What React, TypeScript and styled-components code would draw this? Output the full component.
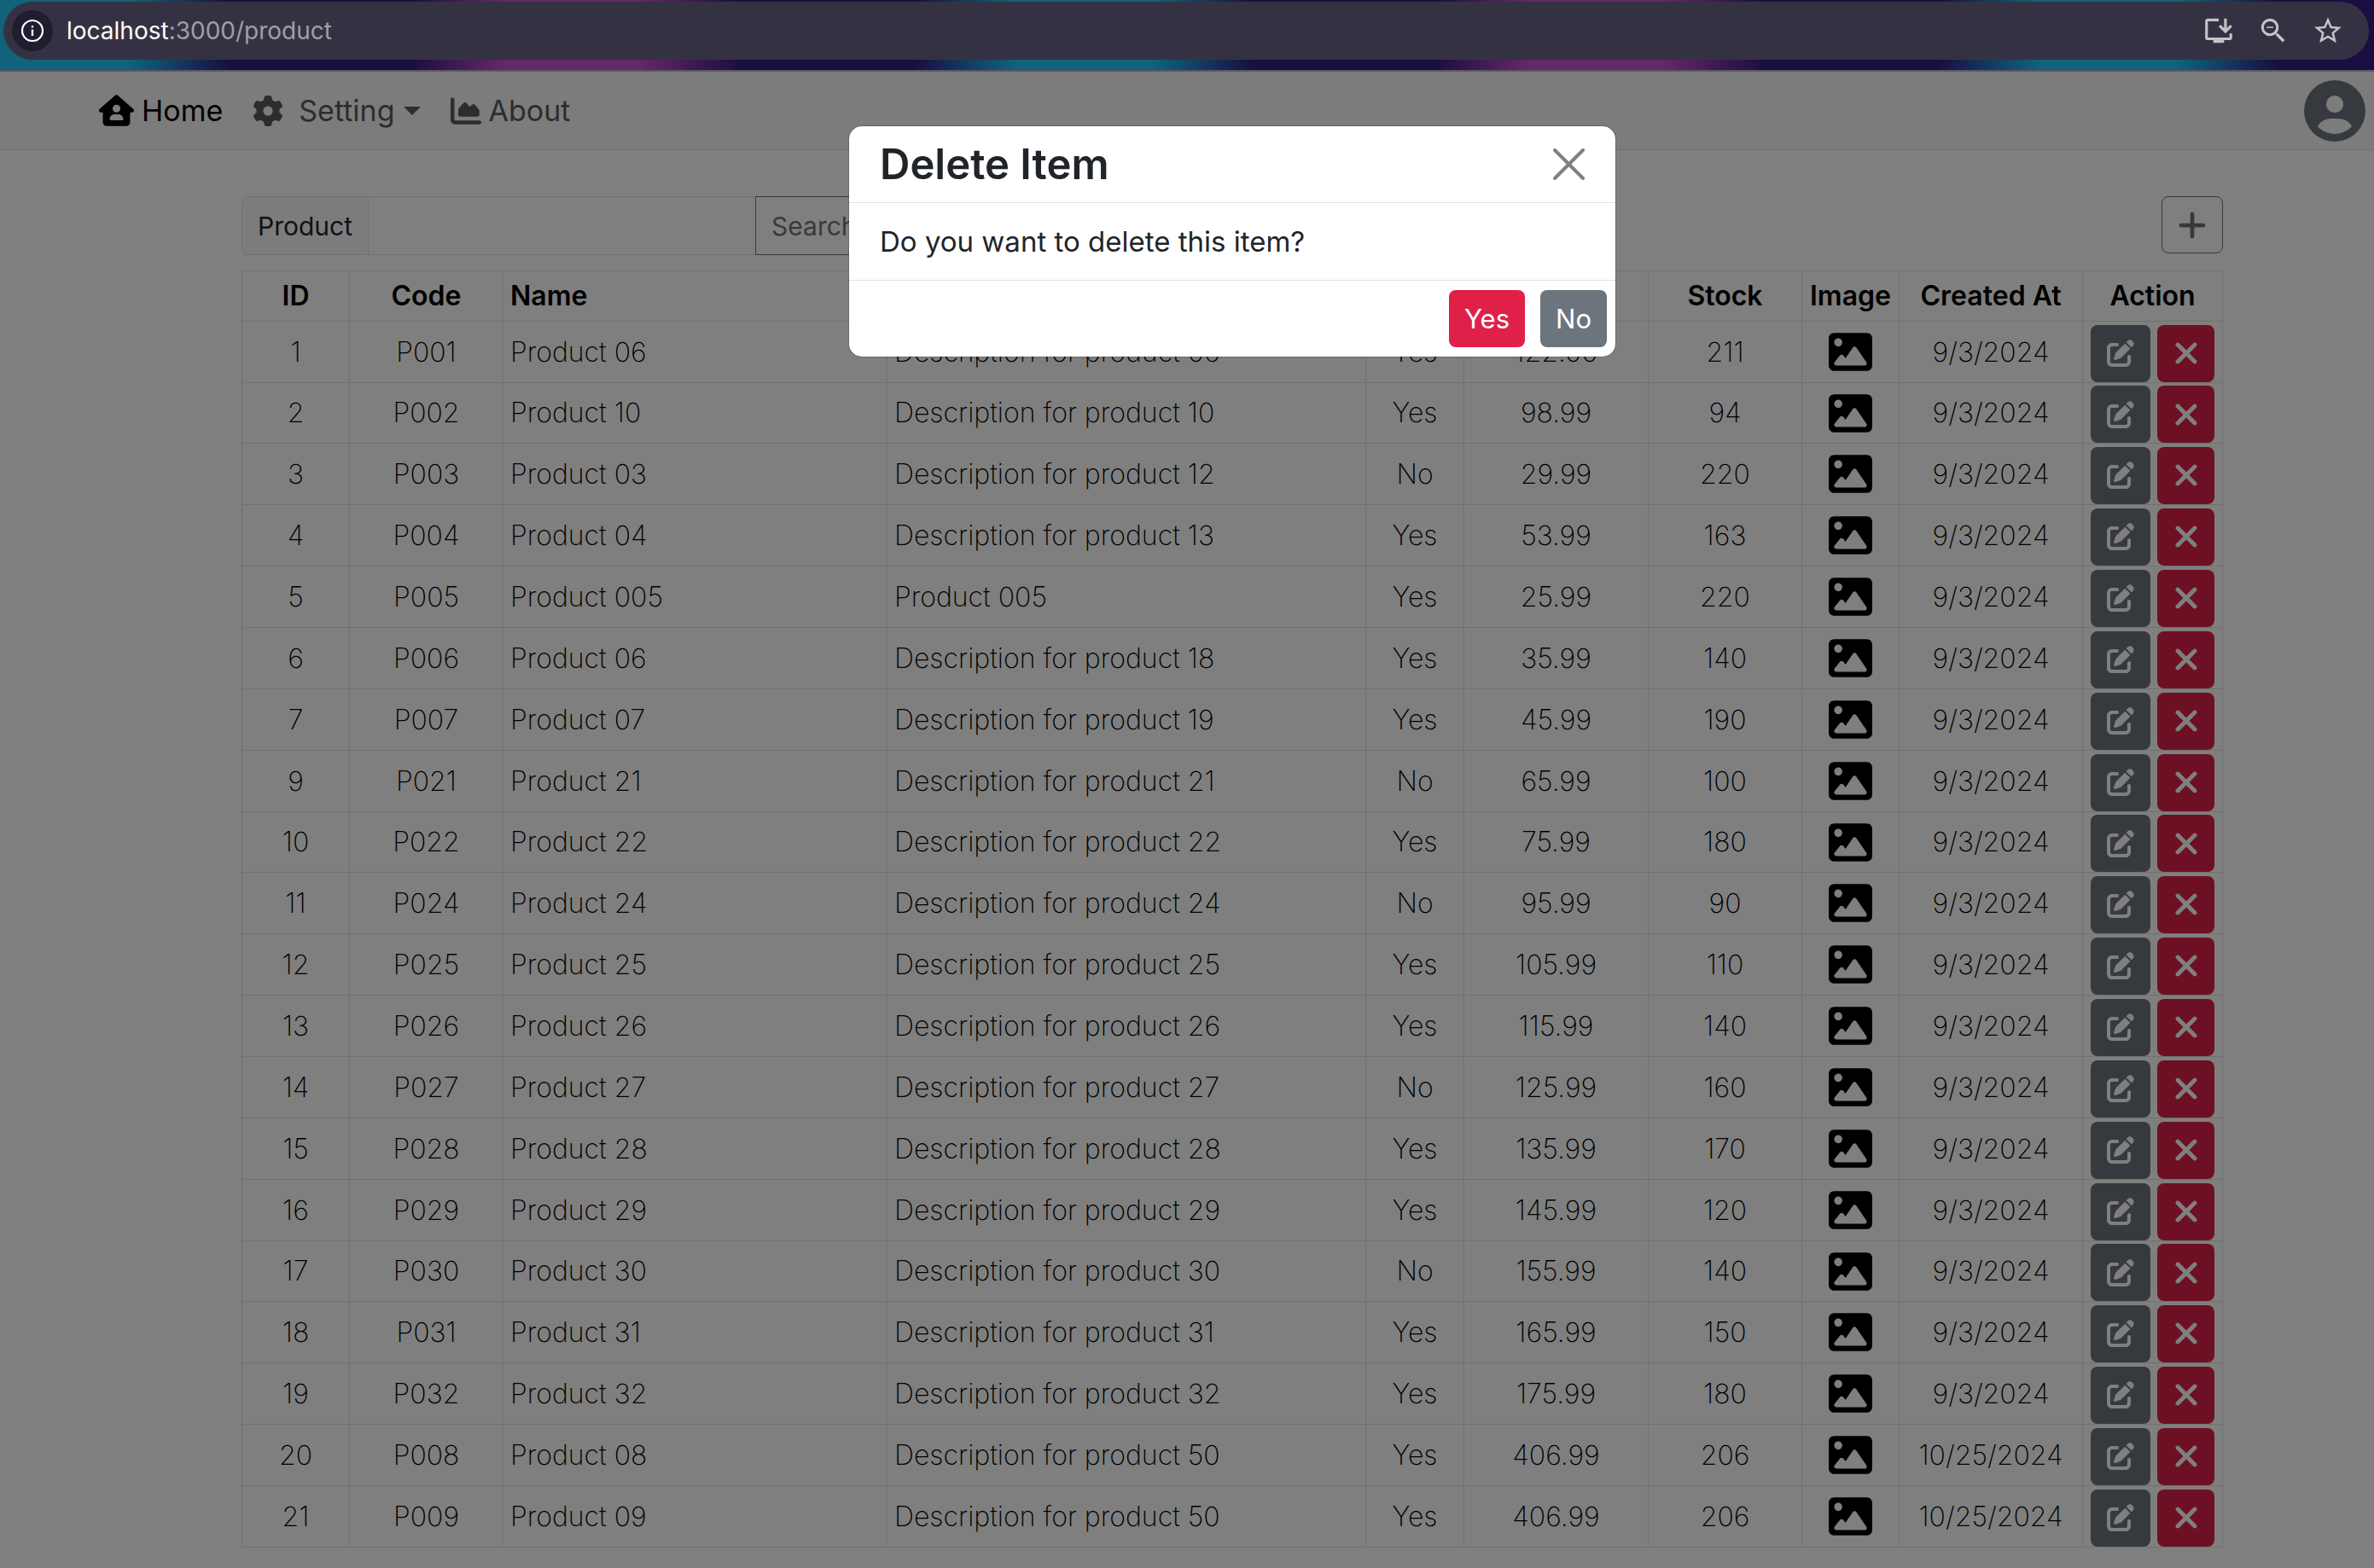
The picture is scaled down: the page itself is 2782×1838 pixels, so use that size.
import React from "react";
import styled, { createGlobalStyle } from "styled-components";
import {
  FaChartArea,
  FaCircleUser,
  FaGear,
  FaHouseUser,
  FaImage,
  FaPenToSquare,
  FaPlus,
  FaXmark,
} from "react-icons/fa6";
import { MdOutlineInstallDesktop, MdStarBorder, MdZoomOut } from "react-icons/md";

const GlobalStyle = createGlobalStyle`
  *, *::before, *::after { box-sizing: border-box; }
  body {
    margin: 0;
    background: #fff;
    color: #212529;
    font-family: Inter, "Liberation Sans", sans-serif;
    font-size: 32px;
    line-height: 48px;
  }
  button, input { font: inherit; color: inherit; margin: 0; }
  button { cursor: pointer; }
  svg { display: block; flex: none; }
`;

const Screen = styled.div`
  display: flex;
  flex-direction: column;
  min-height: 100vh;
`;

const BrowserBar = styled.header`
  padding: 2px 6px 12px 4px;
  border-bottom: 2px solid #5a5764;
  background: repeating-linear-gradient(
    90deg,
    #10637b 0,
    #10637b 150px,
    #190d42 270px,
    #190d42 480px,
    #652866 590px,
    #652866 750px,
    #190d42 870px,
    #190d42 1070px,
    #10637b 1190px,
    #10637b 1200px
  );
`;

const AddressBar = styled.div`
  display: flex;
  align-items: center;
  height: 68px;
  padding: 0 29px 0 10px;
  border-radius: 34px;
  background: #343242;
`;

const SiteInfo = styled.button`
  display: grid;
  place-items: center;
  width: 48px;
  height: 48px;
  padding: 0;
  border: 0;
  border-radius: 50%;
  background: #1f1d2f;
  color: #fff;
`;

const Address = styled.div`
  flex: 1;
  padding-left: 16px;
  font-size: 28px;
  line-height: 40px;
  color: #9f9fa6;
`;

const Host = styled.span`
  color: #fff;
`;

const BrowserActions = styled.div`
  display: flex;
  gap: 26px;
  font-size: 38px;
  color: #c4c3c7;
`;

const IconButton = styled.button`
  display: block;
  padding: 0;
  border: 0;
  background: none;
  font-size: inherit;
  color: inherit;
`;

const Viewport = styled.div`
  position: relative;
  flex: 1;
`;

const Navbar = styled.nav`
  display: flex;
  align-items: center;
  justify-content: space-between;
  height: 92px;
  padding: 0 10px 0 116px;
  border-bottom: 1px solid #dee2e6;
  background: #f8f9fa;
`;

const NavLinks = styled.div`
  display: flex;
  align-items: center;
  gap: 35px;
`;

const NavLink = styled.a<{ $active?: boolean; $gap: number }>`
  display: flex;
  align-items: center;
  gap: ${(p) => p.$gap}px;
  font-size: 34px;
  text-decoration: none;
  color: ${(p) => (p.$active ? "#000" : "#595a5a")};
`;

const Caret = styled.span`
  border: 10px solid transparent;
  border-top-color: currentColor;
  border-bottom: 0;
`;

const SettingLabel = styled.span`
  display: flex;
  align-items: center;
  gap: 10px;
`;

const Avatar = styled.button`
  padding: 0;
  border: 0;
  background: none;
  font-size: 72px;
  color: #6c757d;
`;

const Content = styled.main`
  padding: 54px 177px 22px 283px;
`;

const Toolbar = styled.div`
  display: flex;
  align-items: flex-start;
  justify-content: space-between;
  margin-bottom: 18px;
`;

const SearchGroup = styled.form`
  display: flex;
  height: 69px;
`;

const SearchLabel = styled.label`
  display: flex;
  align-items: center;
  padding: 0 18px;
  border: 1px solid #dee2e6;
  border-radius: 8px 0 0 8px;
  background: #f8f9fa;
  font-size: 30px;
`;

const SearchInput = styled.input`
  width: 453px;
  padding: 0 18px;
  border: 1px solid #dee2e6;
  border-left: 0;
  border-right: 0;
  background: #fff;
`;

const OutlineButton = styled.button<{ $attached?: boolean }>`
  display: flex;
  align-items: center;
  padding: 0 ${(p) => (p.$attached ? 18 : 16)}px;
  height: ${(p) => (p.$attached ? 69 : 67)}px;
  border: 1px solid #6c757d;
  border-radius: ${(p) => (p.$attached ? "0 8px 8px 0" : "8px")};
  background: none;
  color: #6c757d;
  font-size: 30px;

  svg { font-size: 38px; }
`;

const Table = styled.table`
  width: 100%;
  table-layout: fixed;
  border-collapse: collapse;
  color: #000;
`;

const Col = styled.col<{ $width?: number }>`
  width: ${(p) => (p.$width ? `${p.$width}px` : "auto")};
`;

const Th = styled.th<{ $left?: boolean }>`
  height: 59px;
  padding: 0 ${(p) => (p.$left ? 8 : 0)}px;
  border: 1px solid #dee2e6;
  font-size: 32px;
  font-weight: 600;
  text-align: ${(p) => (p.$left ? "left" : "center")};
`;

const Row = styled.tr`
  height: 72px;

  &:nth-child(7n + 2) { height: 71px; }
`;

const Td = styled.td<{ $left?: boolean }>`
  padding: 0 ${(p) => (p.$left ? 8 : 0)}px;
  border: 1px solid #dee2e6;
  font-size: 32px;
  font-weight: 200;
  text-align: ${(p) => (p.$left ? "left" : "center")};

  & > svg {
    margin: 0 auto;
    font-size: 51px;
  }
`;

const RowActions = styled.div`
  display: flex;
  justify-content: center;
  gap: 8px;
  padding-top: 3px;
`;

const RowButton = styled.button<{ $danger?: boolean }>`
  display: grid;
  place-items: center;
  width: ${(p) => (p.$danger ? 67 : 70)}px;
  height: 67px;
  padding: 0;
  border: 0;
  border-radius: 8px;
  background: ${(p) => (p.$danger ? "#dc2046" : "#6c757d")};
  color: #fff;
  font-size: ${(p) => (p.$danger ? 40 : 32)}px;
`;

const Backdrop = styled.div`
  position: absolute;
  inset: 0;
  display: flex;
  align-items: flex-start;
  justify-content: center;
  padding: 63px 177px 0 283px;
  background: rgba(0, 0, 0, 0.5);
`;

const Dialog = styled.section`
  width: 900px;
  border: 1px solid rgba(0, 0, 0, 0.18);
  border-radius: 16px;
  background: #fff;
  background-clip: padding-box;
`;

const DialogHeader = styled.div`
  display: flex;
  align-items: center;
  justify-content: space-between;
  height: 90px;
  padding: 0 36px;
  border-bottom: 1px solid #dee2e6;
`;

const DialogTitle = styled.h2`
  margin: 0;
  font-size: 49px;
  line-height: 60px;
  font-weight: 600;
`;

const DialogBody = styled.p`
  margin: 0;
  padding: 21px 36px;
  font-size: 33px;
`;

const DialogFooter = styled.div`
  display: flex;
  justify-content: flex-end;
  gap: 18px;
  padding: 11px 10px;
  border-top: 1px solid #dee2e6;
`;

const DialogButton = styled.button<{ $danger?: boolean }>`
  height: 67px;
  padding: 0 18px;
  border: 0;
  border-radius: 8px;
  background: ${(p) => (p.$danger ? "#e02049" : "#6c757d")};
  color: #fff;
  font-size: 31px;
`;

const columns: { title: string; width?: number; left?: boolean }[] = [
  { title: "ID", width: 126 },
  { title: "Code", width: 180 },
  { title: "Name", width: 450, left: true },
  { title: "Description", left: true },
  { title: "Status", width: 115 },
  { title: "Price", width: 216 },
  { title: "Stock", width: 180 },
  { title: "Image", width: 114 },
  { title: "Created At", width: 215 },
  { title: "Action", width: 164 },
];

type Product = [number, string, string, string, string, string, number, string];

const products: Product[] = [
  [1, "P001", "Product 06", "Description for product 06", "Yes", "122.00", 211, "9/3/2024"],
  [2, "P002", "Product 10", "Description for product 10", "Yes", "98.99", 94, "9/3/2024"],
  [3, "P003", "Product 03", "Description for product 12", "No", "29.99", 220, "9/3/2024"],
  [4, "P004", "Product 04", "Description for product 13", "Yes", "53.99", 163, "9/3/2024"],
  [5, "P005", "Product 005", "Product 005", "Yes", "25.99", 220, "9/3/2024"],
  [6, "P006", "Product 06", "Description for product 18", "Yes", "35.99", 140, "9/3/2024"],
  [7, "P007", "Product 07", "Description for product 19", "Yes", "45.99", 190, "9/3/2024"],
  [9, "P021", "Product 21", "Description for product 21", "No", "65.99", 100, "9/3/2024"],
  [10, "P022", "Product 22", "Description for product 22", "Yes", "75.99", 180, "9/3/2024"],
  [11, "P024", "Product 24", "Description for product 24", "No", "95.99", 90, "9/3/2024"],
  [12, "P025", "Product 25", "Description for product 25", "Yes", "105.99", 110, "9/3/2024"],
  [13, "P026", "Product 26", "Description for product 26", "Yes", "115.99", 140, "9/3/2024"],
  [14, "P027", "Product 27", "Description for product 27", "No", "125.99", 160, "9/3/2024"],
  [15, "P028", "Product 28", "Description for product 28", "Yes", "135.99", 170, "9/3/2024"],
  [16, "P029", "Product 29", "Description for product 29", "Yes", "145.99", 120, "9/3/2024"],
  [17, "P030", "Product 30", "Description for product 30", "No", "155.99", 140, "9/3/2024"],
  [18, "P031", "Product 31", "Description for product 31", "Yes", "165.99", 150, "9/3/2024"],
  [19, "P032", "Product 32", "Description for product 32", "Yes", "175.99", 180, "9/3/2024"],
  [20, "P008", "Product 08", "Description for product 50", "Yes", "406.99", 206, "10/25/2024"],
  [21, "P009", "Product 09", "Description for product 50", "Yes", "406.99", 206, "10/25/2024"],
];

const InfoIcon = () => (
  <svg width="28" height="28" viewBox="0 0 28 28" fill="none" stroke="currentColor">
    <circle cx="14" cy="14" r="12" strokeWidth="2.2" />
    <path d="M14 12.6v7.4" strokeWidth="2.4" />
    <path d="M14 8v2.4" strokeWidth="2.4" />
  </svg>
);

const CloseIcon = () => (
  <svg width="37" height="37" viewBox="0 0 37 37" fill="none" stroke="#808080" strokeWidth="4" strokeLinecap="round">
    <path d="M2 2l33 33M35 2L2 35" />
  </svg>
);

export default function App() {
  return (
    <Screen>
      <GlobalStyle />
      <BrowserBar>
        <AddressBar>
          <SiteInfo aria-label="Site information">
            <InfoIcon />
          </SiteInfo>
          <Address>
            <Host>localhost</Host>:3000/product
          </Address>
          <BrowserActions>
            <IconButton aria-label="Install app">
              <MdOutlineInstallDesktop />
            </IconButton>
            <IconButton aria-label="Zoom out">
              <MdZoomOut />
            </IconButton>
            <IconButton aria-label="Bookmark">
              <MdStarBorder />
            </IconButton>
          </BrowserActions>
        </AddressBar>
      </BrowserBar>

      <Viewport>
        <Navbar>
          <NavLinks>
            <NavLink href="#home" $active $gap={9}>
              <FaHouseUser size={41} />
              Home
            </NavLink>
            <NavLink href="#setting" $gap={18}>
              <FaGear size={36} />
              <SettingLabel>
                Setting
                <Caret />
              </SettingLabel>
            </NavLink>
            <NavLink href="#about" $gap={9}>
              <FaChartArea size={36} />
              About
            </NavLink>
          </NavLinks>
          <Avatar aria-label="Account">
            <FaCircleUser />
          </Avatar>
        </Navbar>

        <Content>
          <Toolbar>
            <SearchGroup onSubmit={(e) => e.preventDefault()}>
              <SearchLabel htmlFor="product-search">Product</SearchLabel>
              <SearchInput id="product-search" type="text" />
              <OutlineButton type="submit" $attached>
                Search
              </OutlineButton>
            </SearchGroup>
            <OutlineButton type="button" aria-label="Add product">
              <FaPlus />
            </OutlineButton>
          </Toolbar>

          <Table>
            <colgroup>
              {columns.map((c) => (
                <Col key={c.title} $width={c.width} />
              ))}
            </colgroup>
            <thead>
              <tr>
                {columns.map((c) => (
                  <Th key={c.title} scope="col" $left={c.left}>
                    {c.title}
                  </Th>
                ))}
              </tr>
            </thead>
            <tbody>
              {products.map(([id, code, name, description, status, price, stock, created]) => (
                <Row key={id}>
                  <Td>{id}</Td>
                  <Td>{code}</Td>
                  <Td $left>{name}</Td>
                  <Td $left>{description}</Td>
                  <Td>{status}</Td>
                  <Td>{price}</Td>
                  <Td>{stock}</Td>
                  <Td>
                    <FaImage />
                  </Td>
                  <Td>{created}</Td>
                  <Td>
                    <RowActions>
                      <RowButton aria-label={`Edit ${code}`}>
                        <FaPenToSquare />
                      </RowButton>
                      <RowButton $danger aria-label={`Delete ${code}`}>
                        <FaXmark />
                      </RowButton>
                    </RowActions>
                  </Td>
                </Row>
              ))}
            </tbody>
          </Table>
        </Content>

        <Backdrop>
          <Dialog role="dialog" aria-modal="true" aria-labelledby="dialog-title">
            <DialogHeader>
              <DialogTitle id="dialog-title">Delete Item</DialogTitle>
              <IconButton aria-label="Close">
                <CloseIcon />
              </IconButton>
            </DialogHeader>
            <DialogBody>Do you want to delete this item?</DialogBody>
            <DialogFooter>
              <DialogButton $danger>Yes</DialogButton>
              <DialogButton>No</DialogButton>
            </DialogFooter>
          </Dialog>
        </Backdrop>
      </Viewport>
    </Screen>
  );
}
